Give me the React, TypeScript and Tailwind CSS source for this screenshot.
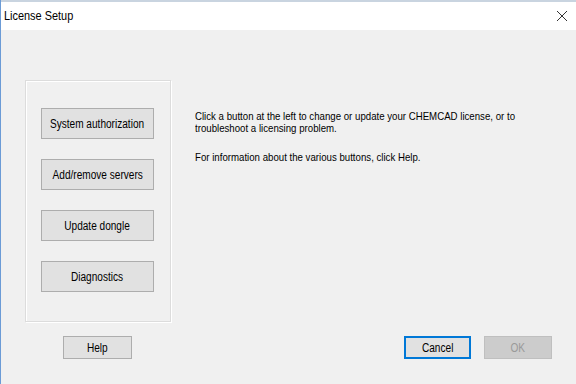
import React from 'react';

const font = { fontFamily: '"Liberation Sans", Arial, sans-serif' };

// Narrow text, like the squeezed dialog font in the screenshot
function Narrow({ children, className = '' }: { children: React.ReactNode; className?: string }) {
  return <span className={`inline-block whitespace-nowrap scale-x-[0.84] ${className}`}>{children}</span>;
}

function WinButton({ label, className = '' }: { label: string; className?: string }) {
  return (
    <button className={`flex items-center justify-center border border-[#adadad] bg-[#e1e1e1] text-[12px] text-black ${className}`}>
      <Narrow className="origin-center">{label}</Narrow>
    </button>
  );
}

export default function App() {
  return (
    <div className="w-[576px] h-[384px] overflow-hidden bg-[#f0f0f0] flex flex-col border-l border-[#6b9bd6]" style={font}>
      {/* Title bar */}
      <div className="h-[30px] bg-white border-t-2 border-[#c9d4e0] flex items-center justify-between pl-[3px] pr-[8px]">
        <Narrow className="origin-left text-[13px] text-black scale-x-[0.8]">License Setup</Narrow>
        <svg width="12" height="12" viewBox="0 0 12 12" className="text-[#333]">
          <path d="M1 1 L11 11 M11 1 L1 11" stroke="currentColor" strokeWidth="1" />
        </svg>
      </div>

      {/* Content */}
      <div className="flex pt-[50px] pl-[24px]">
        <div className="w-[147px] h-[242px] border border-[#dcdcdc] shadow-[inset_1px_1px_0_#ffffff,1px_1px_0_#ffffff] flex flex-col gap-[20px] pt-[27px] pl-[15px]">
          <WinButton label="System authorization" className="w-[113px] h-[31px]" />
          <WinButton label="Add/remove servers" className="w-[113px] h-[31px]" />
          <WinButton label="Update dongle" className="w-[113px] h-[31px]" />
          <WinButton label="Diagnostics" className="w-[113px] h-[31px]" />
        </div>
        <div className="pl-[24px] pt-[30px] text-[11.5px] leading-[12px] text-black flex flex-col">
          <Narrow className="origin-left">Click a button at the left to change or update your CHEMCAD license, or to</Narrow>
          <Narrow className="origin-left">troubleshoot a licensing problem.</Narrow>
          <Narrow className="origin-left mt-[17px]">For information about the various buttons, click Help.</Narrow>
        </div>
      </div>

      {/* Bottom buttons */}
      <div className="flex items-center pt-[14px] pl-[62px] pr-[24px]">
        <WinButton label="Help" className="w-[69px] h-[23px]" />
        <div className="flex-1" />
        <button className="w-[67px] h-[23px] flex items-center justify-center border-2 border-[#0078d7] bg-[#e1e1e1] text-[12px] text-black">
          <Narrow className="origin-center">Cancel</Narrow>
        </button>
        <button className="ml-[13px] w-[68px] h-[23px] flex items-center justify-center border border-[#bfbfbf] bg-[#cccccc] text-[12px] text-[#9a9a9a]">
          <Narrow className="origin-center">OK</Narrow>
        </button>
      </div>
    </div>
  );
}
